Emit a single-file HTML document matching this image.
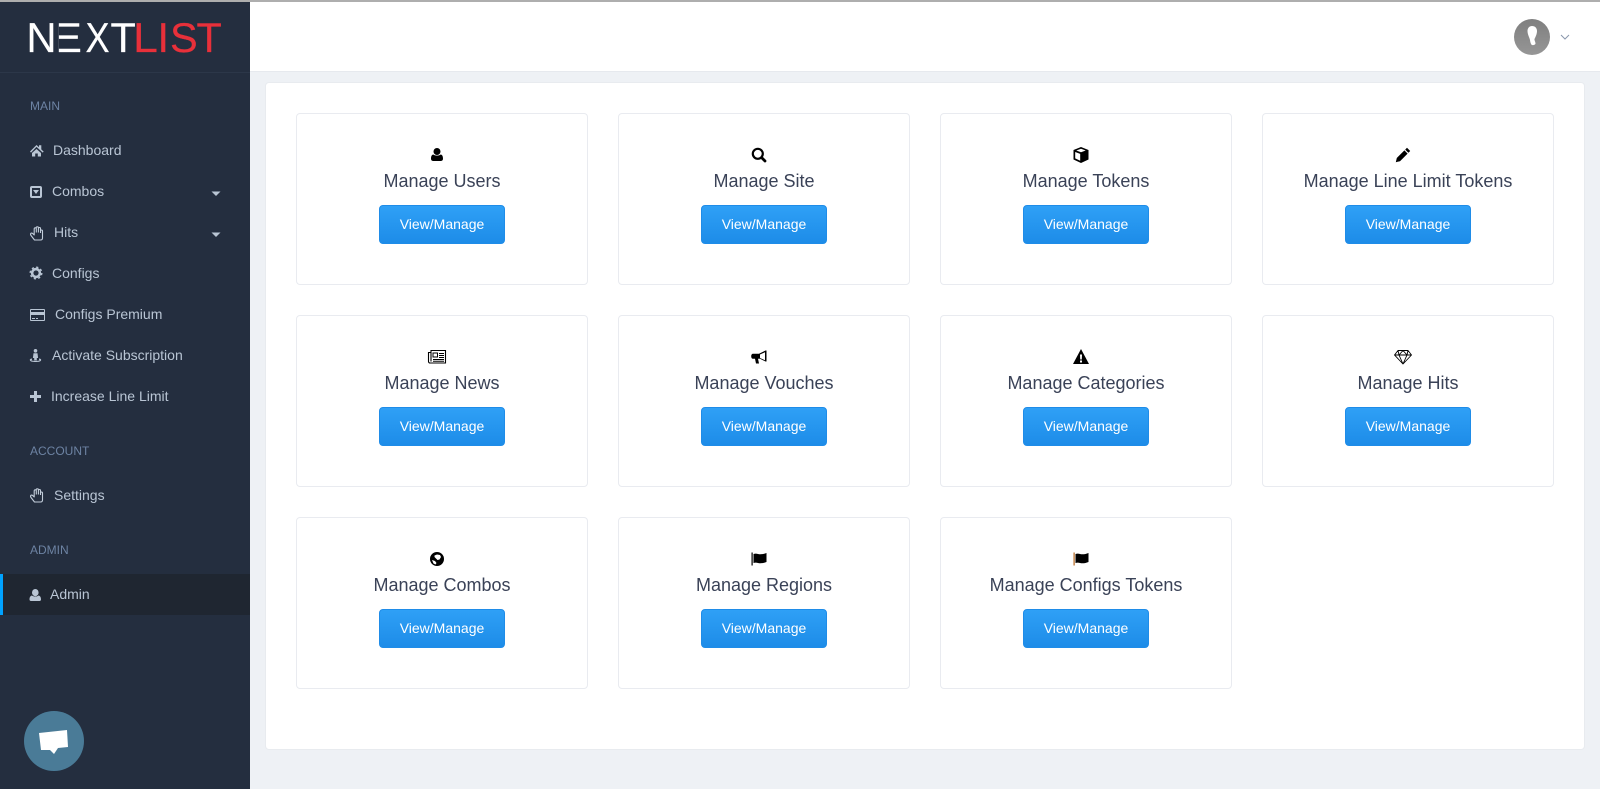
<!DOCTYPE html>
<html><head><meta charset="utf-8"><title>NextList Admin</title>
<style>
*{box-sizing:border-box}
html,body{margin:0;padding:0;width:1600px;height:789px;overflow:hidden;background:#eef1f5;font-family:"Liberation Sans",sans-serif}
.abs,.side,.nav,.lab,.card,.top,.panel{position:absolute}
.top{left:0;top:0;width:1600px;height:72px;background:#fff;border-top:2px solid #aeaeae;border-bottom:1px solid #e6e9ee}
.side{left:0;top:2px;width:250px;height:787px;background:#242e3f}
.hr{position:absolute;left:0;top:70px;width:250px;height:1px;background:#2c3749}
.lab{left:30px;font-size:12px;line-height:14px;color:#6d83a3}
.nav{font-size:14px;line-height:18px;color:#b9c5d4;white-space:nowrap}
.ic{position:absolute;display:block;overflow:visible}
.active{position:absolute;left:0;top:572px;width:250px;height:41px;background:#1f2631;border-left:3px solid #00a2ff}
.panel{left:265px;top:82px;width:1320px;height:668px;background:#fff;border:1px solid #e8ebef;border-radius:4px}
.card{width:292px;height:172px;background:#fff;border:1px solid #e9ebf0;border-radius:4px;text-align:center}
.card svg{position:absolute;left:132px;top:33px;width:16px;height:16px;overflow:visible}
.card svg.w{left:131px;width:18px}
.card b{position:absolute;left:0;right:0;top:56px;font-weight:400;font-size:18px;line-height:22px;color:#3a4257}
.card a{position:absolute;left:82px;top:91px;width:126px;height:39px;line-height:37px;font-size:14px;color:#fff;border:1px solid #1f8ce8;border-radius:4px;background:linear-gradient(#2fa0f6,#1d8ce8)}
</style></head><body>
<div class="top"></div>
<div class="side">
<svg class="ic" style="left:0;top:-2px" width="250" height="72">
<g font-family="Liberation Sans" font-size="41.500" fill="#fff" stroke="#fff" stroke-width=".2">
<text transform="translate(50.300 52) scale(1.150 1)">E</text>
<rect x="50" y="20" width="8.800" height="34" fill="#242e3f" stroke="none"/>
<text transform="translate(26.500 52)">N</text>
<text transform="translate(85.500 52) scale(.87 1)">X</text>
<text transform="translate(110.500 52)">T</text>
<g fill="#e8303a" stroke="#e8303a">
<text transform="translate(133 52) scale(1.080 1)">L</text>
<text transform="translate(157.500 52)">I</text>
<text transform="translate(170 52)">S</text>
<text transform="translate(196.500 52)">T</text>
</g></g>
</svg>
<div class="hr"></div>
<div class="lab" style="top:97px">MAIN</div>
<div class="active"></div>
<div class="nav" style="left:53px;top:139px">Dashboard</div>
<div class="nav" style="left:52px;top:180px">Combos</div>
<div class="nav" style="left:54px;top:221px">Hits</div>
<div class="nav" style="left:52px;top:262px">Configs</div>
<div class="nav" style="left:55px;top:303px">Configs Premium</div>
<div class="nav" style="left:52px;top:344px">Activate Subscription</div>
<div class="nav" style="left:51px;top:385px">Increase Line Limit</div>
<div class="lab" style="top:442px">ACCOUNT</div>
<div class="nav" style="left:54px;top:484px">Settings</div>
<div class="lab" style="top:541px">ADMIN</div>
<div class="nav" style="left:50px;top:583px">Admin</div>
<svg class="ic" style="left:0;top:-2px" width="250" height="789" fill="#b9c5d4">
<path d="M30 151.500l6.500-6.500 2.500 2.300V145.300h2.300v4.100l2.400 2.200-1 1-6.200-5.700-5.500 5.700zM32 153l4.500-4 4.500 4v3.500h-3.200v-3h-2.600v3H32z"/>
<path fill-rule="evenodd" d="M32 186h8a2 2 0 0 1 2 2v8a2 2 0 0 1-2 2h-8a2 2 0 0 1-2-2v-8a2 2 0 0 1 2-2zm0 2v8h8v-8zm1 2h6l-3 4z"/>
<path d="M211.500 191.500h9l-4.500 4.500z"/>
<path d="M211.500 232.500h9l-4.500 4.500z"/>
<g fill="none" stroke="#c3cedb" stroke-width="1.100" stroke-linejoin="round" id="h">
<path d="M34.500 240H40.500Q42.500 240 42.500 238V231Q42.500 230 41.500 230Q40.500 230 40.500 231V228.500Q40.500 227.500 39.500 227.500Q38.500 227.500 38.500 228.500V227.800Q38.500 226.800 37.300 226.800Q36.200 226.800 36.200 227.800V228.500Q36.200 227.800 35.200 227.800Q34.200 227.800 34.200 229V235L32.800 233.600Q31.500 232.600 30.800 233.400Q30.200 234.200 31 235.500zM36.300 228.500v4M38.400 228.500v4M40.500 231v2"/>
<path transform="translate(0 262)" d="M34.500 240H40.500Q42.500 240 42.500 238V231Q42.500 230 41.500 230Q40.500 230 40.500 231V228.500Q40.500 227.500 39.500 227.500Q38.500 227.500 38.500 228.500V227.800Q38.500 226.800 37.300 226.800Q36.200 226.800 36.200 227.800V228.500Q36.200 227.800 35.200 227.800Q34.200 227.800 34.200 229V235L32.800 233.600Q31.500 232.600 30.800 233.400Q30.200 234.200 31 235.500zM36.300 228.500v4M38.400 228.500v4M40.500 231v2"/>
</g>
<circle cx="36" cy="273" r="3.900" fill="none" stroke="#b9c5d4" stroke-width="2.600"/>
<circle cx="36" cy="273" r="5.800" fill="none" stroke="#b9c5d4" stroke-width="1.400" stroke-dasharray="2.200 2.350"/>
<path fill-rule="evenodd" d="M31 309h13a1 1 0 0 1 1 1v10a1 1 0 0 1-1 1H31a1 1 0 0 1-1-1v-10a1 1 0 0 1 1-1zm0 1v2h13v-2zm0 5v5h13v-5zm1 3h3v1h-3zm4 0h2v1h-2z"/>
<path d="M35.500 349a1.800 1.800 0 1 1 0 3.600 1.800 1.800 0 0 1 0-3.600zM33.500 353.200h4l.6 4.800h-1.300v2.500h-2.600V358h-1.300zM32 358.500v1.300c-1.200.3-1 1.200 3.500 1.200s4.700-.9 3.500-1.200v-1.300c2 .3 2.500 1 2 2-.5 1.200-3 1.500-5.500 1.500s-5-.3-5.500-1.500c-.5-1 0-1.700 2-2z"/>
<path d="M34 391h3v4h4v3h-4v4h-3v-4h-4v-3h4z"/>
<path d="M35.300 589a3.300 3.600 0 1 1 0 7.200 3.300 3.600 0 0 1 0-7.200zM32 595.500c1.500 1.400 5 1.400 6.500 0 1.700.3 2.500 1.800 2.500 4 0 1-.7 1.500-1.500 1.500h-8.500c-.8 0-1.500-.5-1.500-1.500 0-2.200.8-3.700 2.500-4z"/>
<circle cx="54" cy="741" r="30" fill="#4a7b97"/>
<path fill="#fff" d="M39 733l28-3 1 17-10 1-4 6-4-4-9 0z"/>
</svg>
</div>
<svg class="ic" style="left:1514px;top:19px" width="60" height="36">
<defs><linearGradient id="a" x1="0" y1="0" x2="0" y2="1"><stop offset="0" stop-color="#7f7f7f"/><stop offset="1" stop-color="#969696"/></linearGradient></defs>
<circle cx="18" cy="18" r="18" fill="url(#a)"/>
<path fill="#fff" d="M18 7c3 0 5 2 5 5 0 3-1.500 6-2.500 8-.3 1 1 3 1 4.500 0 1-2 2-3.500 1.500-1-.4-1.800-3-2-5-.5-2.500-2.500-5.500-2.500-9 0-3 2-5 4.500-5z"/>
<path fill="none" stroke="#8a97ad" stroke-width="1" d="M47 16l4 4 4-4"/>
</svg>
<div class="panel"></div>

<div class="card" style="left:296px;top:113px"><svg viewBox="0 0 16 16"><path d="M8 1a3.500 3.500 0 1 1 0 7 3.500 3.500 0 0 1 0-7zM4.300 7.500c2 1.500 5.400 1.500 7.400 0 1.700.3 2.300 2 2.300 4.300 0 1.400-.8 2.200-2 2.200H4c-1.200 0-2-.8-2-2.200 0-2.300.6-4 2.300-4.300z"/></svg><b>Manage Users</b><a>View/Manage</a></div>
<div class="card" style="left:618px;top:113px"><svg viewBox="0 0 16 16"><circle cx="6.800" cy="6.800" r="5" fill="none" stroke="#000" stroke-width="2.200"/><path stroke="#000" stroke-width="2.800" stroke-linecap="round" d="M11 11l3 3"/></svg><b>Manage Site</b><a>View/Manage</a></div>
<div class="card" style="left:940px;top:113px"><svg viewBox="0 0 16 16"><path fill-rule="evenodd" d="M8 0l7.500 3v9.500L8 16 .5 12.500V3zM3.300 3.500L8 5.300l4.700-1.800L8 1.800zM2.200 5v6.400l5 2.400V6.900z"/></svg><b>Manage Tokens</b><a>View/Manage</a></div>
<div class="card" style="left:1262px;top:113px"><svg viewBox="0 0 16 16"><path d="M12 .8l3.200 3.200-1.800 1.800-3.200-3.200zM9.400 3.400l3.200 3.200-7.600 7.600-4.200 1 1-4.200z"/></svg><b>Manage Line Limit Tokens</b><a>View/Manage</a></div>

<div class="card" style="left:296px;top:315px"><svg class="w" viewBox="0 0 18 16"><path fill="none" stroke="#000" stroke-width="1.100" d="M3 1.500h14.500v12.500H2a1.500 1.500 0 0 1-1.500-1.500V3.500H3zM3 3.500v9"/><path fill="none" stroke="#000" d="M5 4h4.500v4H5z"/><path stroke="#000" d="M11 4.500h5M11 6.500h5M11 8.500h5M5 10.500h11M5 12.300h11"/></svg><b>Manage News</b><a>View/Manage</a></div>
<div class="card" style="left:618px;top:315px"><svg viewBox="0 0 16 16"><path fill-rule="evenodd" d="M15.500 1.500v11h-1L9 9.800H7l1 4.700H5L4 9.800H2C.8 9.800.2 8.800.2 7.300S.8 4.800 2 4.800h6l6.500-3.300zM9 5.500v3.500l5 2.200V3.200z"/></svg><b>Manage Vouches</b><a>View/Manage</a></div>
<div class="card" style="left:940px;top:315px"><svg viewBox="0 0 16 16"><path fill-rule="evenodd" d="M8 0l8 15H0zM7 5.500l.2 5h1.600l.2-5zM7 11.500v2h2v-2z"/></svg><b>Manage Categories</b><a>View/Manage</a></div>
<div class="card" style="left:1262px;top:315px"><svg class="w" viewBox="0 0 18 16"><path fill="none" stroke="#000" stroke-width=".9" stroke-linejoin="round" d="M4 1.500h10l3.500 4.500L9 15 .5 6zM.5 6h17M5 6l4 9 4-9M4 1.500L5 6l4-4.500L13 6l1-4.500"/></svg><b>Manage Hits</b><a>View/Manage</a></div>

<div class="card" style="left:296px;top:517px"><svg viewBox="0 0 16 16"><path fill-rule="evenodd" d="M8 1a7 7 0 1 1 0 14A7 7 0 0 1 8 1zM5.500 4.500L8 3.500l3 .5 1 2-1.500 2.500-2 .5L7 7.500 5.500 6zM3 9l3 1 1.500 2-1 1.500-2-1z"/></svg><b>Manage Combos</b><a>View/Manage</a></div>
<div class="card" style="left:618px;top:517px"><svg viewBox="0 0 16 16"><path d="M.5 1.500h1.200v13H.5zM2.500 3c2.800-1 4.500.3 7 .3 2 0 4-.5 6-1.300v9c-2 .8-4 1.300-6 1.300-2.500 0-4.200-1.300-7-.3z"/></svg><b>Manage Regions</b><a>View/Manage</a></div>
<div class="card" style="left:940px;top:517px"><svg viewBox="0 0 16 16"><path fill="#b5651d" d="M.5 1.500h1.200v13H.5z"/><path d="M2.500 3c2.800-1 4.500.3 7 .3 2 0 4-.5 6-1.300v9c-2 .8-4 1.300-6 1.300-2.500 0-4.200-1.300-7-.3z"/></svg><b>Manage Configs Tokens</b><a>View/Manage</a></div>
</body></html>
